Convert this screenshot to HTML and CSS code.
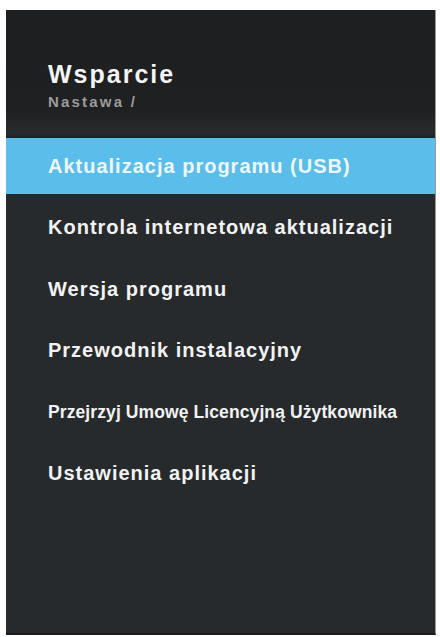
FILE: index.html
```html
<!DOCTYPE html>
<html lang="pl">
<head>
    <meta charset="UTF-8">
    <meta name="viewport" content="width=device-width, initial-scale=1.0">
    <title>Wsparcie</title>
    <link rel="stylesheet" href="styles.css">
</head>
<body>
    <div class="screen">
        <div class="header">
            <div class="title">Wsparcie</div>
            <div class="path">Nastawa /</div>
        </div>
        <div class="menu">
            <div class="item active">Aktualizacja programu (USB)</div>
            <div class="item">Kontrola internetowa aktualizacji</div>
            <div class="item">Wersja programu</div>
            <div class="item">Przewodnik instalacyjny</div>
            <div class="item small">Przejrzyj Umowę Licencyjną Użytkownika</div>
            <div class="item">Ustawienia aplikacji</div>
        </div>
    </div>
</body>
</html>
```

FILE: styles.css
```css
body {
    margin: 0;
    padding: 10px 4px 2px 6px;
    background: #fff;
    font-family: "Liberation Sans", Arial, sans-serif;
}
.screen {
    width: 430px;
    height: 625px;
    box-sizing: border-box;
    background: #262a2c;
    border-right: 1px solid #9a9a9a;
    border-bottom: 2px solid #1a1c1d;
    display: flex;
    flex-direction: column;
}
.header {
    height: 128px;
    box-sizing: border-box;
    padding: 50px 0 0 42px;
    background: linear-gradient(to bottom, #1d1f20 0%, #1e2021 78%, #292c2d 96%, #13222c 100%);
}
.title {
    font-size: 25px;
    line-height: 29px;
    font-weight: bold;
    letter-spacing: 2px;
    color: #f4f4f4;
}
.path {
    margin-top: 4px;
    font-size: 15px;
    line-height: 17px;
    font-weight: bold;
    letter-spacing: 2.2px;
    color: #9c9c9c;
}
.menu {
    display: flex;
    flex-direction: column;
    gap: 5.4px;
}
.item {
    height: 56px;
    display: flex;
    align-items: center;
    padding-left: 42px;
    font-size: 20px;
    line-height: 22px;
    font-weight: bold;
    letter-spacing: 1px;
    color: #f2f2f2;
}
.item.active {
    background: #5bbde9;
    color: #eef7fc;
}
.item.small {
    font-size: 17.5px;
    letter-spacing: 0.1px;
}
```
